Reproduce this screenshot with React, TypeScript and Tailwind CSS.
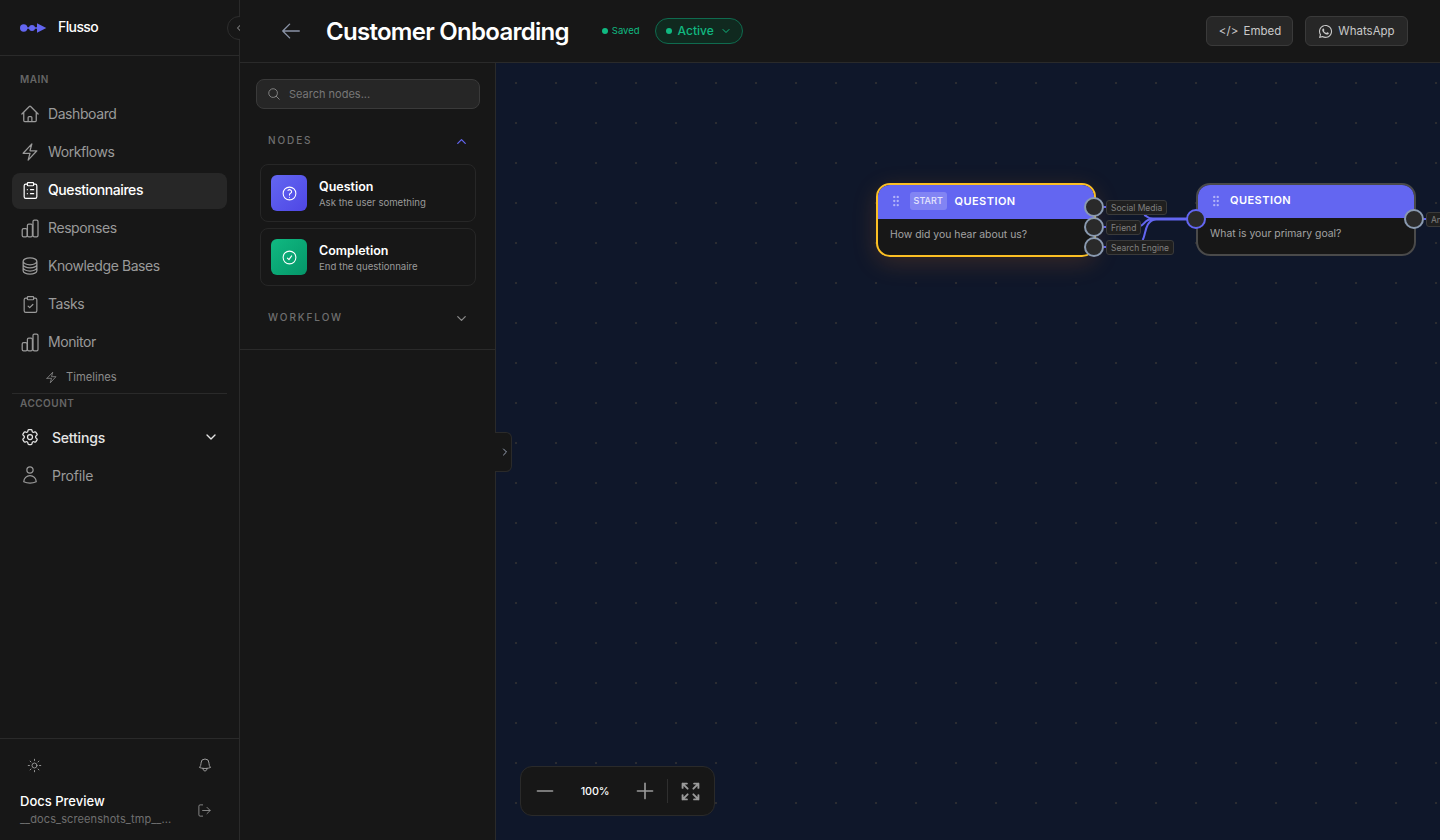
import { ReactNode } from 'react';
import {
  ChevronDown, ChevronLeft, ChevronRight, ChevronUp, ClipboardCheck, ClipboardList, GripVertical, LogOut, Minus, Plus, Sun,
} from 'lucide-react';
import { FaWhatsapp } from 'react-icons/fa';
import {
  HiOutlineArrowLeft, HiOutlineArrowsPointingOut, HiOutlineBell, HiOutlineBolt, HiOutlineCheckCircle,
  HiOutlineCircleStack, HiOutlineCog6Tooth, HiOutlineHome, HiOutlineMagnifyingGlass, HiOutlineQuestionMarkCircle, HiOutlineUser,
} from 'react-icons/hi2';

const FONT = 'font-["Inter","Noto_Sans",sans-serif]';

function BarsIcon() {
  return (
    <svg width="20" height="20" viewBox="0 0 20 20" fill="none" stroke="currentColor" strokeWidth="1.25">
      <rect x="2.2" y="10.5" width="5" height="8.3" rx="1.4" />
      <rect x="7.4" y="6" width="5" height="12.8" rx="1.4" />
      <rect x="13" y="2" width="5" height="16.8" rx="1.4" />
    </svg>
  );
}

const NAV = [
  { label: 'Dashboard', icon: <HiOutlineHome size={20} /> },
  { label: 'Workflows', icon: <HiOutlineBolt size={20} /> },
  { label: 'Questionnaires', icon: <ClipboardList size={19} strokeWidth={1.5} />, active: true },
  { label: 'Responses', icon: <BarsIcon /> },
  { label: 'Knowledge Bases', icon: <HiOutlineCircleStack size={20} /> },
  { label: 'Tasks', icon: <ClipboardCheck size={19} strokeWidth={1.5} /> },
  { label: 'Monitor', icon: <BarsIcon /> },
];

function NavRow({ label, icon, active }: { label: string; icon: ReactNode; active?: boolean }) {
  return (
    <div
      className={`flex h-9 items-center gap-[8px] rounded-lg px-[8px] pb-[2px] text-[14px] tracking-[-0.42px] ${
        active ? 'bg-[#272727] font-medium text-white' : 'text-[#9a9a9a]'
      }`}
    >
      <span className="flex w-5 justify-center">{icon}</span>
      <span className="-mt-[2px]">{label}</span>
    </div>
  );
}

function Sidebar() {
  return (
    <aside className="relative flex h-full w-[240px] shrink-0 flex-col border-r border-[#2a2a2a] bg-[#171717]">
      <div className="flex h-[56px] shrink-0 items-center gap-[11px] border-b border-[#2a2a2a] pl-[20px]">
        <svg width="27" height="12" viewBox="0 0 27 12" className="text-[#6366f1]" fill="currentColor">
          <circle cx="3.7" cy="6" r="3.7" />
          <circle cx="12" cy="6" r="3" />
          <path d="M7 5.3h3v1.4H7zM14 5.3h3.5v1.4H14z" />
          <path d="M17 1.2 26.3 6 17 10.8z" />
        </svg>
        <span className="-mt-[2px] text-[14px] font-medium tracking-[-0.6px] text-white">Flusso</span>
      </div>
      <div className="absolute left-[227px] top-[16px] flex h-6 w-6 items-center justify-center rounded-full border border-[#2e2e2e] bg-[#171717] text-[#9a9a9a]">
        <ChevronLeft size={12} />
      </div>

      <div className="flex flex-1 flex-col px-[12px] pt-[16px]">
        <div className="mb-[10px] px-[8px] text-[10px] font-semibold leading-[14px] tracking-[0.5px] text-[#666]">MAIN</div>
        <div className="mt-[1px] flex flex-col gap-[2px]">
          {NAV.map((item) => (
            <NavRow key={item.label} {...item} />
          ))}
        </div>
        <div className="flex h-[32px] items-center gap-[9px] pl-[33px] text-[11.2px] text-[#8b8b8b]">
          <HiOutlineBolt size={13} />
          <span className="-ml-px">Timelines</span>
        </div>
        <div className="border-t border-[#2a2a2a] px-[8px] pt-[2px] text-[10px] font-semibold leading-[14px] tracking-[0.5px] text-[#666]">
          ACCOUNT
        </div>
        <div className="mt-[10px] flex flex-col gap-[2px]">
          <div className="flex h-9 items-center gap-[12px] px-[8px] pb-[2px] text-[14px] font-medium tracking-[-0.2px] text-[#e5e5e5]">
            <span className="flex w-5 justify-center"><HiOutlineCog6Tooth size={20} /></span>
            Settings
            <ChevronDown size={16} className="ml-auto" />
          </div>
          <div className="flex h-9 items-center gap-[12px] px-[8px] pb-[2px] text-[14px] tracking-[-0.2px] text-[#9a9a9a]">
            <span className="flex w-5 justify-center"><HiOutlineUser size={20} /></span>
            Profile
          </div>
        </div>
      </div>

      <div className="h-[102px] shrink-0 border-t border-[#2a2a2a] px-[20px]">
        <div className="flex h-[52px] items-center justify-between pl-[7px] pr-[6px] text-[#9a9a9a]">
          <Sun size={15} strokeWidth={1.5} />
          <HiOutlineBell size={16} />
        </div>
        <div className="flex items-center justify-between">
          <div>
            <div className="text-[13px] font-medium leading-[20px] text-white">Docs Preview</div>
            <div className="whitespace-nowrap text-[11px] leading-[16px] tracking-[0.1px] text-[#6f6f6f]">__docs_screenshots_tmp__...</div>
          </div>
          <LogOut size={15} strokeWidth={1.5} className="mr-[7px] mt-[2px] text-[#8b8b8b]" />
        </div>
      </div>
    </aside>
  );
}

function Header() {
  return (
    <header className="relative z-10 flex h-[63px] shrink-0 items-center border-b border-[#2a2a2a] bg-[#171717] pl-[40px] pr-[32px]">
      <HiOutlineArrowLeft size={22} className="text-[#8a93a6]" />
      <h1 className="ml-[24px] pt-[2px] text-[24px] font-semibold leading-8 tracking-[-0.72px] text-white">Customer Onboarding</h1>
      <div className="ml-[33px] flex items-center gap-[4px] text-[9.5px] text-[#10b981]">
        <span className="h-[6px] w-[6px] rounded-full bg-[#10b981]" />
        Saved
      </div>
      <div className="ml-[15px] flex h-[26px] items-center rounded-full border border-[#0f6b4f] bg-[#10291f] pl-[10px] pr-[10px] text-[12px] font-medium text-[#10b981]">
        <span className="mr-[6px] h-[6px] w-[6px] rounded-full bg-[#10b981]" />
        Active
        <ChevronDown size={12} className="ml-[6px]" />
      </div>
      <div className="ml-auto flex gap-[12px] text-[11.5px] text-[#c9c9c9]">
        <div className="flex h-[30px] w-[87px] items-center justify-center gap-[5px] rounded-md border border-[#3a3a3a] bg-[#272727] pl-[1px] pt-[2px]">
          <span className="tracking-[0.2px]">&lt;/&gt;</span> Embed
        </div>
        <div className="flex h-[30px] w-[103px] items-center justify-center gap-[5px] rounded-md border border-[#3a3a3a] bg-[#272727]">
          <FaWhatsapp size={15} /> <span className="mt-[2px]">WhatsApp</span>
        </div>
      </div>
    </header>
  );
}

function PaletteItem({ title, text, tile, icon }: { title: string; text: string; tile: string; icon: ReactNode }) {
  return (
    <div className="flex h-[58px] items-center gap-[12px] rounded-lg border border-[#272727] px-[10px]">
      <div className={`flex h-9 w-9 items-center justify-center rounded-md text-white ${tile}`}>{icon}</div>
      <div className="pt-[3px]">
        <div className="text-[12.5px] font-semibold leading-[16px] text-white">{title}</div>
        <div className="mt-[1px] text-[9.6px] leading-[14px] text-[#9a9a9a]">{text}</div>
      </div>
    </div>
  );
}

function NodePanel() {
  return (
    <div className="relative z-10 w-[256px] shrink-0 border-r border-[#2a2a2a] bg-[#171717]">
      <div className="border-b border-[#2a2a2a] pb-[23px] pl-[16px] pr-[15px] pt-[16px]">
        <div className="flex h-[30px] items-center gap-[8px] rounded-lg border border-[#3a3a3a] bg-[#262626] px-[10px] text-[11px] text-[#777]">
          <HiOutlineMagnifyingGlass size={14} className="text-[#8b8b8b]" />
          Search nodes...
        </div>
        <div className="mt-[24px] flex h-[16px] items-center justify-between pl-[12px] pr-[11px] text-[10px] font-medium tracking-[1.9px] text-[#6f6f6f]">
          <span className="-mt-[2px]">NODES</span>
          <ChevronUp size={15} strokeWidth={2} className="text-[#6366f1]" />
        </div>
        <div className="mt-[15px] flex flex-col gap-[6px] px-[4px]">
          <PaletteItem
            title="Question"
            text="Ask the user something"
            tile="bg-gradient-to-br from-[#6366f1] to-[#4f46e5]"
            icon={<HiOutlineQuestionMarkCircle size={17} />}
          />
          <PaletteItem
            title="Completion"
            text="End the questionnaire"
            tile="bg-gradient-to-br from-[#10b981] to-[#059669]"
            icon={<HiOutlineCheckCircle size={17} />}
          />
        </div>
        <div className="mt-[24px] flex h-[16px] items-center justify-between pl-[12px] pr-[11px] text-[10px] font-medium tracking-[1.9px] text-[#6f6f6f]">
          <span className="-mt-[2px]">WORKFLOW</span>
          <ChevronDown size={15} strokeWidth={2} className="text-[#8b8b8b]" />
        </div>
      </div>
      <div className="absolute left-[255px] top-[369px] flex h-[40px] w-[17px] items-center justify-center rounded-r-md border border-l-0 border-[#2a2a2a] bg-[#171717] pl-[3px] text-[#9aa3b5]">
        <ChevronRight size={12} strokeWidth={2} />
      </div>
    </div>
  );
}

function Handle({ x, y, input }: { x: number; y: number; input?: boolean }) {
  return (
    <div
      className={`absolute h-[20px] w-[20px] rounded-full border-2 bg-[#2a2a2a] ${input ? 'border-[#6366f1]' : 'border-[#8a9ab0]'}`}
      style={{ left: x - 10, top: y - 10 }}
    />
  );
}

function EdgeLabel({ x, y, text }: { x: number; y: number; text: string }) {
  return (
    <div
      className="absolute flex h-[15px] items-center whitespace-nowrap rounded-[3px] border border-[#3a3a3a] bg-[#1f1f1f] px-[4px] pt-[1px] text-[8.5px] text-[#808080]"
      style={{ left: x, top: y - 8 }}
    >
      {text}
    </div>
  );
}

function FlowNode({ x, y, h, head, border, text, start }: { x: number; y: number; h: number; head: number; border: string; text: string; start?: boolean }) {
  return (
    <div
      className={`absolute w-[220px] overflow-hidden rounded-[14px] border-2 bg-[#171717] ${border}`}
      style={{ left: x, top: y, height: h }}
    >
      <div className="flex items-center bg-[#6366f1] pb-[2px] pl-[11px] text-[11px] font-semibold tracking-[0.45px] text-white" style={{ height: head }}>
        <GripVertical size={14} className="text-white/50" />
        {start && (
          <span className="ml-[7px] flex h-[18px] items-center rounded-[3px] bg-white/20 px-[3.5px] text-[9px] font-medium tracking-[0.1px] text-white/80">START</span>
        )}
        <span className={start ? 'ml-[8px]' : 'ml-[7px]'}>QUESTION</span>
      </div>
      <div className="pl-[12px] pt-[8px] text-[10.4px] leading-[16px] text-[#a3a3a3]">{text}</div>
    </div>
  );
}

function Canvas() {
  // canvas starts at x=496, y=63
  const ox = 496;
  const oy = 63;
  return (
    <div className="relative flex-1 overflow-hidden bg-[#0f172a] bg-[radial-gradient(circle,#2b2c31_1px,transparent_1.2px)] bg-[length:40px_40px]">
      <svg className="absolute left-0 top-0" width="944" height="777" fill="none" stroke="#6366f1">
        <g transform={`translate(${-ox} ${-oy})`}>
          <path d="M1104 207h6M1104 227h6M1104 247h6M1424 219h4" strokeWidth="2" />
          <path d="M1150 219h38" strokeWidth="3" />
          <path d="M1144 215c3 .5 4 4 9 4M1140 226c5-1 4-7 13-7M1142.5 240C1146 236 1144 221 1156 219" strokeWidth="2" />
        </g>
      </svg>
      <div className="absolute left-[380px] top-[120px] h-[74px] w-[220px] rounded-[14px] shadow-[0_6px_24px_rgba(245,120,30,0.18)]" />
      <FlowNode x={380} y={120} h={74} head={34} border="border-[#fbbf24]" text="How did you hear about us?" start />
      <FlowNode x={700} y={120} h={73} head={33} border="border-[#4a4a4a]" text="What is your primary goal?" />
      <Handle x={598} y={144} />
      <Handle x={598} y={164} />
      <Handle x={598} y={184} />
      <Handle x={700} y={156} input />
      <Handle x={918} y={156} />
      <EdgeLabel x={610} y={145} text="Social Media" />
      <EdgeLabel x={610} y={165} text="Friend" />
      <EdgeLabel x={610} y={185} text="Search Engine" />
      <EdgeLabel x={930} y={157} text="Answer" />

      <div className="absolute bottom-[24px] left-[24px] flex h-[50px] w-[195px] items-center rounded-xl border border-[#2a2a2a] bg-[#171717] text-[#9a9a9a]">
        <span className="flex w-[48px] justify-center"><Minus size={26} strokeWidth={1.5} /></span>
        <span className="w-[52px] pt-[2px] text-center text-[10.8px] font-medium tracking-[-0.1px] text-white">100%</span>
        <span className="flex w-[48px] justify-center"><Plus size={26} strokeWidth={1.5} /></span>
        <span className="-ml-[2px] h-[24px] w-px bg-[#2f2f2f]" />
        <span className="flex flex-1 justify-center pr-[2px]"><HiOutlineArrowsPointingOut size={23} strokeWidth={2} /></span>
      </div>
    </div>
  );
}

export default function App() {
  return (
    <div className={`flex h-[840px] w-[1440px] overflow-hidden bg-[#171717] ${FONT}`}>
      <Sidebar />
      <div className="flex min-w-0 flex-1 flex-col">
        <Header />
        <div className="flex min-h-0 flex-1">
          <NodePanel />
          <Canvas />
        </div>
      </div>
    </div>
  );
}
